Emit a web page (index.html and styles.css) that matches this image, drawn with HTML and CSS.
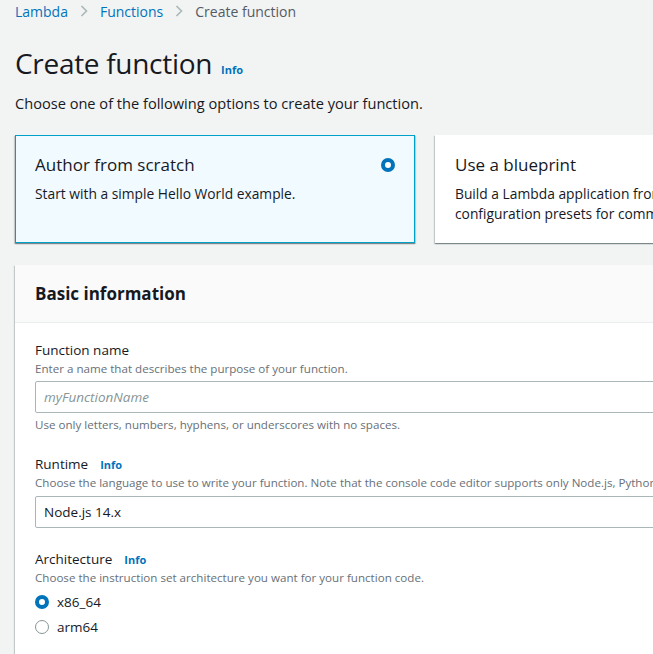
FILE: index.html
```html
<!DOCTYPE html>
<html lang="en">
<head>
<meta charset="utf-8">
<title>Create function</title>
<link rel="stylesheet" href="styles.css">
</head>
<body>
<div class="page">
  <nav class="breadcrumbs">
    <a class="crumb-link" href="#">Lambda</a>
    <svg class="chev" width="8" height="12" viewBox="0 0 8 12"><path d="M1.5 1 L6.5 6 L1.5 11" fill="none" stroke="#aab7b8" stroke-width="1.6"/></svg>
    <a class="crumb-link" href="#">Functions</a>
    <svg class="chev" width="8" height="12" viewBox="0 0 8 12"><path d="M1.5 1 L6.5 6 L1.5 11" fill="none" stroke="#aab7b8" stroke-width="1.6"/></svg>
    <span class="crumb-current">Create function</span>
  </nav>

  <div class="title-row">
    <h1 class="title">Create function</h1>
    <a class="info" href="#">Info</a>
  </div>
  <p class="subtitle">Choose one of the following options to create your function.</p>

  <div class="cards">
    <div class="card card-selected">
      <div class="card-head">
        <span class="card-title">Author from scratch</span>
        <span class="radio radio-on"></span>
      </div>
      <p class="card-desc">Start with a simple Hello World example.</p>
    </div>
    <div class="card">
      <div class="card-head">
        <span class="card-title">Use a blueprint</span>
        <span class="radio"></span>
      </div>
      <p class="card-desc">Build a Lambda application from sample code and configuration presets for common use cases.</p>
    </div>
  </div>

  <section class="panel">
    <header class="panel-head">
      <h2 class="panel-title">Basic information</h2>
    </header>
    <div class="panel-body">
      <div class="field">
        <div class="label-row"><span class="label">Function name</span></div>
        <div class="desc">Enter a name that describes the purpose of your function.</div>
        <div class="input"><span class="placeholder">myFunctionName</span></div>
        <div class="constraint">Use only letters, numbers, hyphens, or underscores with no spaces.</div>
      </div>
      <div class="field">
        <div class="label-row"><span class="label">Runtime</span><a class="info" href="#">Info</a></div>
        <div class="desc">Choose the language to use to write your function. Note that the console code editor supports only Node.js, Python, and Ruby.</div>
        <div class="input select"><span class="value">Node.js 14.x</span></div>
      </div>
      <div class="field">
        <div class="label-row"><span class="label">Architecture</span><a class="info" href="#">Info</a></div>
        <div class="desc">Choose the instruction set architecture you want for your function code.</div>
        <div class="radio-group">
          <label class="radio-row"><span class="radio radio-on"></span><span class="radio-label">x86_64</span></label>
          <label class="radio-row"><span class="radio"></span><span class="radio-label">arm64</span></label>
        </div>
      </div>
    </div>
  </section>
</div>
</body>
</html>
```

FILE: styles.css
```css
html, body {
  margin: 0;
  padding: 0;
}
body {
  background: #f2f3f3;
  font-family: "Open Sans", "Noto Sans", Arial, sans-serif;
  color: #16191f;
  overflow: hidden;
  width: 653px;
  height: 654px;
}
.page {
  width: 960px;
  padding: 1px 15px 0;
}
a { text-decoration: none; }

.breadcrumbs {
  display: flex;
  align-items: center;
  height: 20px;
  font-size: 14px;
  gap: 12px;
}
.crumb-link { color: #0073bb; }
.crumb-current { color: #545b64; }
.chev { display: block; }

.title-row {
  display: flex;
  align-items: baseline;
  gap: 9px;
  margin-top: 24px;
}
.title {
  margin: 0;
  font-size: 28px;
  font-weight: 400;
  line-height: 36px;
  letter-spacing: -0.3px;
}
.info {
  color: #0073bb;
  font-size: 11px;
  font-weight: 700;
}
.subtitle {
  margin: 12px 0 0;
  font-size: 14.6px;
  line-height: 20px;
}

.cards {
  display: grid;
  grid-template-columns: 400px 400px;
  gap: 20px;
  margin-top: 22px;
}
.card {
  background: #fff;
  border: 1px solid #fff;
  box-shadow: 0 1px 1px 0 rgba(0, 28, 36, 0.3), 1px 1px 1px 0 rgba(0, 28, 36, 0.15), -1px 1px 1px 0 rgba(0, 28, 36, 0.15);
  height: 108px;
  box-sizing: border-box;
  padding: 16px 19px;
}
.card-selected {
  background: #f1faff;
  border-color: #00a1c9;
}
.card-head {
  display: flex;
  justify-content: space-between;
  align-items: center;
  height: 26px;
}
.card-title {
  font-size: 17px;
  line-height: 26px;
}
.card-desc {
  margin: 6px 0 0;
  font-size: 13.8px;
  line-height: 20px;
}

.radio {
  display: inline-block;
  width: 14px;
  height: 14px;
  box-sizing: border-box;
  border-radius: 50%;
  border: 1px solid #879596;
  background: #fff;
  flex: none;
}
.radio-on {
  border: 4px solid #0073bb;
  background: #fff;
}

.panel {
  margin-top: 22px;
  background: #fff;
  box-shadow: 0 1px 1px 0 rgba(0, 28, 36, 0.3), 1px 1px 1px 0 rgba(0, 28, 36, 0.15), -1px 1px 1px 0 rgba(0, 28, 36, 0.15);
}
.panel-head {
  background: #fafafa;
  border-bottom: 1px solid #eaeded;
  padding: 16px 20px 15px;
}
.panel-title {
  margin: 0;
  font-size: 17px;
  font-weight: 700;
  line-height: 26px;
}
.panel-body {
  padding: 17px 20px 20px;
}
.field + .field { margin-top: 21px; }
.label-row {
  display: flex;
  align-items: baseline;
  gap: 12px;
  height: 20px;
}
.label {
  font-size: 13.5px;
  line-height: 20px;
}
.desc, .constraint {
  font-size: 11.6px;
  line-height: 16px;
  color: #687078;
  white-space: nowrap;
}
.desc { margin-top: 1px; }
.input {
  margin-top: 4px;
  height: 32px;
  box-sizing: border-box;
  border: 1px solid #aab7b8;
  border-radius: 2px;
  background: #fff;
  padding: 0 8px;
  display: flex;
  align-items: center;
  font-size: 13.5px;
}
.select { margin-top: 5px; }
.placeholder {
  color: #879596;
  font-style: italic;
}
.value { color: #16191f; }
.constraint { margin-top: 4px; }

.radio-group {
  display: flex;
  flex-direction: column;
  margin-top: 3px;
}
.radio-row {
  display: flex;
  align-items: center;
  gap: 8px;
  height: 25px;
  font-size: 13.5px;
}
```
